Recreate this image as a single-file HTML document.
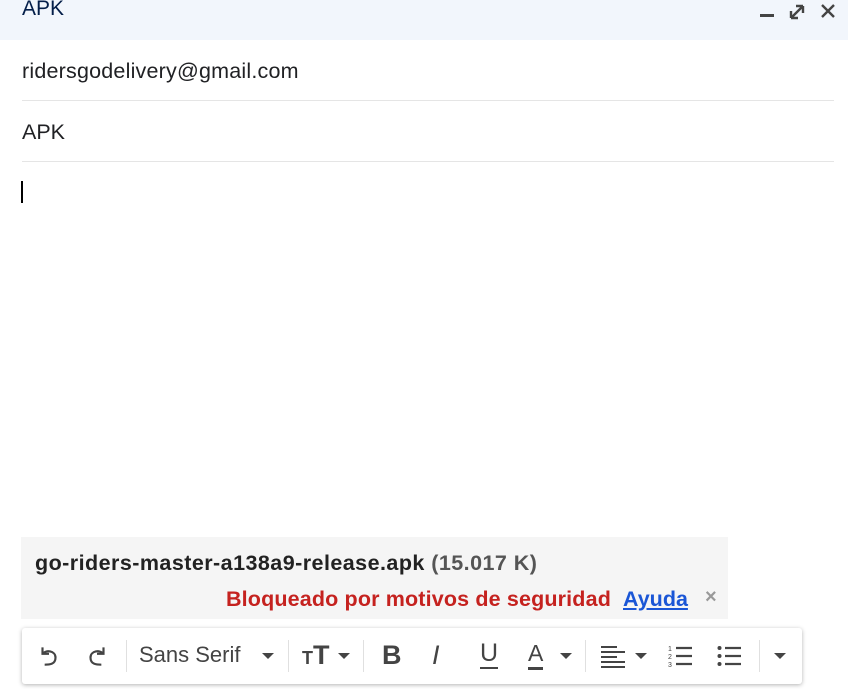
<!DOCTYPE html>
<html><head><meta charset="utf-8"><style>
*{margin:0;padding:0;box-sizing:border-box}
body{width:848px;height:689px;overflow:hidden;background:#fff;font-family:"Liberation Sans",Arial,sans-serif;position:relative;color:#202124}
.hdr{position:absolute;left:0;top:0;width:848px;height:40px;background:#f2f6fc}
.hdr .t{position:absolute;left:22px;top:-3px;font-size:21px;color:#041e49}
.line{position:absolute;left:22px;width:812px;border-bottom:1px solid #e5e5e5;font-size:21.5px;color:#202124;padding-top:3px}
.att{position:absolute;left:21px;top:537px;width:707px;height:82px;background:#f5f5f5}
.tb{position:absolute;left:22px;top:628px;width:780px;height:56px;background:#fff;border-radius:3px;box-shadow:0 1px 4px rgba(0,0,0,.3)}
.sep{position:absolute;top:12px;width:1px;height:32px;background:#e0e0e0}
.tb svg{position:absolute}
.dd{position:absolute;width:0;height:0;border-left:6px solid transparent;border-right:6px solid transparent;border-top:6px solid #444}
</style></head><body>
<div class="hdr"><div class="t">APK</div>
<svg style="position:absolute;left:758px;top:2px" width="80" height="20" viewBox="0 0 80 20"><rect x="2" y="12" width="14" height="3" fill="#444"/><path d="M33 16v-7M33 16h7M33 16l12-12M45 4h-7M45 4v7" stroke="#444" stroke-width="2.4" fill="none"/><path d="M64 3l12 12M76 3l-12 12" stroke="#444" stroke-width="2.4"/></svg>
</div>
<div class="line" style="top:56px;height:45px;letter-spacing:0.2px">ridersgodelivery@gmail.com</div>
<div class="line" style="top:117px;height:45px">APK</div>
<div style="position:absolute;left:21px;top:181px;width:1.5px;height:22px;background:#000"></div>
<div class="att">
<div style="position:absolute;left:14px;top:14px;font-size:21.5px;font-weight:bold;color:#222;letter-spacing:0.45px">go-riders-master-a138a9-release.apk <span style="color:#555">(15.017 K)</span></div>
<div style="position:absolute;left:205px;top:50px;font-size:21.5px;font-weight:bold;color:#c5221f;letter-spacing:0.15px">Bloqueado por motivos de seguridad</div>
<div style="position:absolute;left:602px;top:50px;font-size:21.5px;font-weight:bold;color:#1a56d6;text-decoration:underline">Ayuda</div>
<div style="position:absolute;left:684px;top:49px;font-size:20px;font-weight:bold;color:#999">×</div>
</div>
<div class="tb">
<svg style="left:14px;top:15px" width="26" height="26" viewBox="0 0 24 24"><path d="M6 4v6h6M6 10c3-4 12-3 12 3.5S12 20 8 20" stroke="#444" stroke-width="2" fill="none"/></svg>
<svg style="left:62px;top:15px" width="26" height="26" viewBox="0 0 24 24"><path d="M18 4v6h-6M18 10c-3-4-12-3-12 3.5S12 20 16 20" stroke="#444" stroke-width="2" fill="none"/></svg>
<div class="sep" style="left:104px"></div>
<div style="position:absolute;left:117px;top:14px;font-size:22px;color:#444">Sans Serif</div>
<div class="dd" style="left:240px;top:25px"></div>
<div class="sep" style="left:266px"></div>
<div style="position:absolute;left:280px;top:12px;font-size:27px;font-weight:bold;color:#444"><span style="font-size:18px">T</span>T</div>
<div class="dd" style="left:316px;top:25px"></div>
<div class="sep" style="left:341px"></div>
<div style="position:absolute;left:360px;top:12px;font-size:27px;font-weight:bold;color:#444">B</div>
<div style="position:absolute;left:410px;top:12px;font-size:27px;font-style:italic;color:#444">I</div>
<div style="position:absolute;left:458px;top:12px;font-size:25px;color:#444;border-bottom:2px solid #444;line-height:27px">U</div>
<div style="position:absolute;left:506px;top:12px;font-size:23px;color:#444;border-bottom:3px solid #444;line-height:27px">A</div>
<div class="dd" style="left:538px;top:25px"></div>
<div class="sep" style="left:563px"></div>
<svg style="left:578px;top:16px" width="26" height="24" viewBox="0 0 26 24"><path d="M1 3h16M1 8h24M1 13h16M1 18h24M1 23h24" stroke="#444" stroke-width="2"/></svg>
<div class="dd" style="left:613px;top:25px"></div>
<svg style="left:646px;top:16px" width="26" height="24" viewBox="0 0 26 24"><path d="M8 4h16M8 12h16M8 20h16" stroke="#444" stroke-width="2.2"/><text x="0" y="7" font-size="7" fill="#444" font-family="Liberation Sans">1</text><text x="0" y="15" font-size="7" fill="#444" font-family="Liberation Sans">2</text><text x="0" y="23" font-size="7" fill="#444" font-family="Liberation Sans">3</text></svg>
<svg style="left:695px;top:16px" width="26" height="24" viewBox="0 0 26 24"><path d="M8 4h16M8 12h16M8 20h16" stroke="#444" stroke-width="2.2"/><circle cx="2.5" cy="4" r="2" fill="#444"/><circle cx="2.5" cy="12" r="2" fill="#444"/><circle cx="2.5" cy="20" r="2" fill="#444"/></svg>
<div class="sep" style="left:737px"></div>
<div class="dd" style="left:752px;top:25px"></div>
</div>
</body></html>
